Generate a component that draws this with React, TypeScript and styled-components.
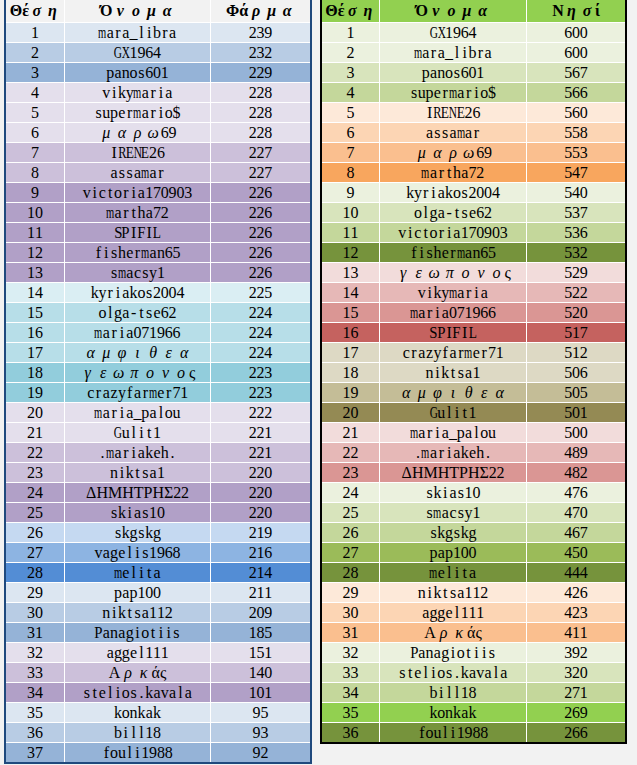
import React from 'react';
import styled, { createGlobalStyle } from 'styled-components';

const Global = createGlobalStyle`
  html, body { margin: 0; padding: 0; background: #f2f2f2; }
  body { font-family: "Liberation Serif", serif; color: #000; }
`;

const Page = styled.div`
  display: flex;
  align-items: flex-start;
  gap: 8px;
  padding-left: 4px;
`;

const Table = styled.div<{ $border: string }>`
  display: grid;
  row-gap: 1px;
  background: #ffffff;
  border: 2px solid ${p => p.$border};
  border-top: none;
`;

const Row = styled.div<{ $cols: string; $h: number }>`
  display: grid;
  grid-template-columns: ${p => p.$cols};
  column-gap: 1px;
  height: ${p => p.$h}px;
`;

const Cell = styled.div<{ $bg: string; $head?: boolean }>`
  background: ${p => p.$bg};
  display: flex;
  align-items: center;
  justify-content: center;
  overflow: hidden;
  white-space: nowrap;
  font-weight: ${p => (p.$head ? 700 : 400)};
  line-height: 1;
`;

/* one half-width (SimSun-like) character slot */
const Slot = styled.span`
  display: inline-flex;
  justify-content: center;
  width: 7.8px;
  font-family: "Liberation Serif", serif;
  font-size: 16px;
  line-height: 1;
`;

const Glyph = styled.span<{ $sx: number }>`
  display: inline-block;
  transform: scaleX(${p => p.$sx});
`;

const GreekFull = styled.span`
  display: inline-block;
  width: 15.6px;
  text-align: center;
  font-family: "Liberation Serif", serif;
  font-size: 16px;
  font-style: italic;
`;

const GreekProp = styled.span`
  font-family: "Liberation Serif", serif;
  font-size: 16px;
`;

/* Times-style advance widths (per 1000 em) */
const W: Record<string, number> = {
  a: 444, b: 500, c: 444, d: 500, e: 444, f: 333, g: 500, h: 500, i: 278, j: 278,
  k: 500, l: 278, m: 778, n: 500, o: 500, p: 500, q: 500, r: 333, s: 389, t: 278,
  u: 500, v: 500, w: 722, x: 500, y: 500, z: 444,
  A: 722, B: 667, C: 667, D: 722, E: 611, F: 556, G: 722, H: 722, I: 333, J: 389,
  K: 722, L: 611, M: 889, N: 722, O: 722, P: 556, Q: 722, R: 667, S: 556, T: 611,
  U: 722, V: 722, W: 944, X: 722, Y: 722, Z: 611,
  _: 500, '.': 250, '-': 333, $: 500,
};

const sxFor = (c: string) => {
  const adv = ((W[c] ?? 500) * 16) / 1000;
  return Math.min(1, 8.2 / adv);
};

const isLowerFull = (c: string) => {
  const k = c.charCodeAt(0);
  return k >= 0x3b1 && k <= 0x3c9 && k !== 0x3c2;
};
const isGreek = (c: string) => {
  const k = c.charCodeAt(0);
  return k >= 0x370 && k <= 0x3ff;
};

function Txt({ s }: { s: string }) {
  return (
    <>
      {Array.from(s).map((c, i) => {
        if (isLowerFull(c)) return <GreekFull key={i}>{c}</GreekFull>;
        if (isGreek(c)) return <GreekProp key={i}>{c}</GreekProp>;
        return (
          <Slot key={i}>
            <Glyph $sx={sxFor(c)}>{c}</Glyph>
          </Slot>
        );
      })}
    </>
  );
}

type Entry = [string, number, string];

const farm: Entry[] = [
  ['mara_libra', 239, '#dce6f1'],
  ['GX1964', 232, '#b8cce4'],
  ['panos601', 229, '#95b3d7'],
  ['vikymaria', 228, '#e4dfec'],
  ['supermario$', 228, '#e4dfec'],
  ['μαρω69', 228, '#e4dfec'],
  ['IRENE26', 227, '#ccc0da'],
  ['assamar', 227, '#ccc0da'],
  ['victoria170903', 226, '#b1a0c7'],
  ['martha72', 226, '#b1a0c7'],
  ['SPIFIL', 226, '#b1a0c7'],
  ['fisherman65', 226, '#b1a0c7'],
  ['smacsy1', 226, '#b1a0c7'],
  ['kyriakos2004', 225, '#daeef3'],
  ['olga-tse62', 224, '#b7dee8'],
  ['maria071966', 224, '#b7dee8'],
  ['αμφιθεα', 224, '#b7dee8'],
  ['γεωπονος', 223, '#92cddc'],
  ['crazyfarmer71', 223, '#92cddc'],
  ['maria_palou', 222, '#e4dfec'],
  ['Gulit1', 221, '#e4dfec'],
  ['.mariakeh.', 221, '#ccc0da'],
  ['niktsa1', 220, '#ccc0da'],
  ['ΔΗΜΗΤΡΗΣ22', 220, '#b1a0c7'],
  ['skias10', 220, '#b1a0c7'],
  ['skgskg', 219, '#c5d9f1'],
  ['vagelis1968', 216, '#8db4e2'],
  ['melita', 214, '#538dd5'],
  ['pap100', 211, '#dce6f1'],
  ['niktsa112', 209, '#b8cce4'],
  ['Panagiotiis', 185, '#95b3d7'],
  ['aggel111', 151, '#e4dfec'],
  ['Αρκάς', 140, '#ccc0da'],
  ['stelios.kavala', 101, '#b1a0c7'],
  ['konkak', 95, '#dce6f1'],
  ['bill18', 93, '#b8cce4'],
  ['fouli1988', 92, '#95b3d7'],
];

const island: Entry[] = [
  ['GX1964', 600, '#ebf1de'],
  ['mara_libra', 600, '#ebf1de'],
  ['panos601', 567, '#d8e4bc'],
  ['supermario$', 566, '#c4d79b'],
  ['IRENE26', 560, '#fde9d9'],
  ['assamar', 558, '#fcd5b4'],
  ['μαρω69', 553, '#fabf8f'],
  ['martha72', 547, '#f8a65e'],
  ['kyriakos2004', 540, '#ebf1de'],
  ['olga-tse62', 537, '#d8e4bc'],
  ['victoria170903', 536, '#c4d79b'],
  ['fisherman65', 532, '#76933c'],
  ['γεωπονος', 529, '#f2dcdb'],
  ['vikymaria', 522, '#e6b8b7'],
  ['maria071966', 520, '#da9694'],
  ['SPIFIL', 517, '#c5625f'],
  ['crazyfarmer71', 512, '#ddd9c4'],
  ['niktsa1', 506, '#ddd9c4'],
  ['αμφιθεα', 505, '#c4bd97'],
  ['Gulit1', 501, '#948a54'],
  ['maria_palou', 500, '#f2dcdb'],
  ['.mariakeh.', 489, '#e6b8b7'],
  ['ΔΗΜΗΤΡΗΣ22', 482, '#da9694'],
  ['skias10', 476, '#ebf1de'],
  ['smacsy1', 470, '#d8e4bc'],
  ['skgskg', 467, '#c4d79b'],
  ['pap100', 450, '#9bbb59'],
  ['melita', 444, '#76933c'],
  ['niktsa112', 426, '#fde9d9'],
  ['aggel111', 423, '#fcd5b4'],
  ['Αρκάς', 411, '#fabf8f'],
  ['Panagiotiis', 392, '#ebf1de'],
  ['stelios.kavala', 320, '#d8e4bc'],
  ['bill18', 271, '#c4d79b'],
  ['konkak', 269, '#92d050'],
  ['fouli1988', 266, '#76933c'],
];

const HeadText = styled.span`
  font-weight: 700;
`;

function RankTable({
  data,
  scoreLabel,
  border,
  headBg,
  cols,
}: {
  data: Entry[];
  scoreLabel: string;
  border: string;
  headBg: string;
  cols: string;
}) {
  return (
    <Table $border={border}>
      <Row $cols={cols} $h={22}>
        {['Θέση', 'Όνομα', scoreLabel].map(h => (
          <Cell key={h} $bg={headBg} $head>
            <HeadText>
              <Txt s={h} />
            </HeadText>
          </Cell>
        ))}
      </Row>
      {data.map(([name, score, bg], i) => (
        <Row key={i} $cols={cols} $h={19}>
          <Cell $bg={bg}>
            <Txt s={String(i + 1)} />
          </Cell>
          <Cell $bg={bg}>
            <Txt s={name} />
          </Cell>
          <Cell $bg={bg}>
            <Txt s={String(score)} />
          </Cell>
        </Row>
      ))}
    </Table>
  );
}

export default function App() {
  return (
    <>
      <Global />
      <Page>
        <RankTable
          data={farm}
          scoreLabel="Φάρμα"
          border="#1f497d"
          headBg="#f2f2f2"
          cols="58px 145px 99px"
        />
        <RankTable
          data={island}
          scoreLabel="Νησί"
          border="#000000"
          headBg="#92d050"
          cols="57px 146px 98px"
        />
      </Page>
    </>
  );
}
